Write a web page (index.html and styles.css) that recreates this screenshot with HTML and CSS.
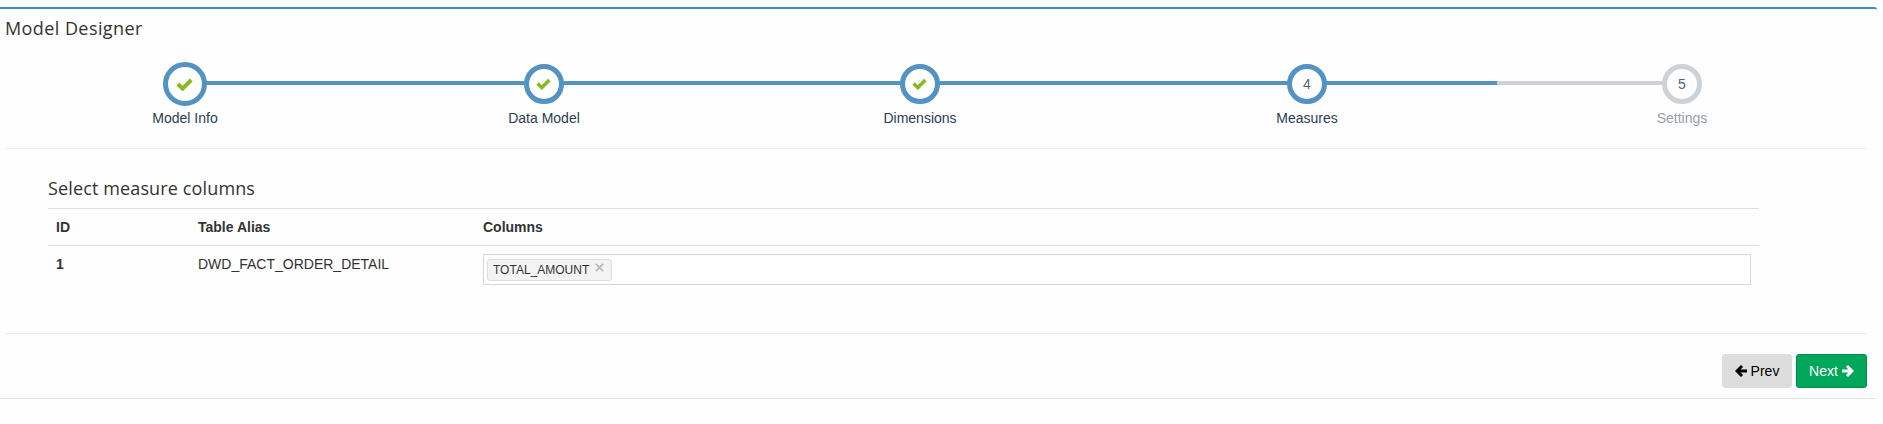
FILE: index.html
```html
<!DOCTYPE html>
<html lang="en">
<head>
<meta charset="utf-8">
<title>Model Designer</title>
<link rel="stylesheet" href="styles.css">
</head>
<body>
<section class="box">
  <h4 class="title">Model Designer</h4>
  <ul class="steps">
    <li class="step done current"><span class="dot"><svg class="check" viewBox="0 0 17 13"><path d="M1.8 6 6.6 10.6 15.2 2"/></svg></span><span class="label">Model Info</span></li>
    <li class="step done"><span class="dot"><svg class="check" viewBox="0 0 17 13"><path d="M1.8 6 6.6 10.6 15.2 2"/></svg></span><span class="label">Data Model</span></li>
    <li class="step done"><span class="dot"><svg class="check" viewBox="0 0 17 13"><path d="M1.8 6 6.6 10.6 15.2 2"/></svg></span><span class="label">Dimensions</span></li>
    <li class="step done"><span class="dot">4</span><span class="label">Measures</span></li>
    <li class="step"><span class="dot">5</span><span class="label">Settings</span></li>
  </ul>
  <div class="content">
    <h4 class="subtitle">Select measure columns</h4>
    <div class="table">
      <div class="row head"><span>ID</span><span>Table Alias</span><span>Columns</span></div>
      <div class="row"><b>1</b><span>DWD_FACT_ORDER_DETAIL</span>
        <div class="select"><span class="tag">TOTAL_AMOUNT<svg class="close" viewBox="0 0 10 10"><path d="M1 1 9 9M9 1 1 9"/></svg></span></div>
      </div>
    </div>
  </div>
  <div class="actions">
    <button class="btn prev"><svg class="arrow" viewBox="0 0 12 12"><path d="M7 1 2 6 7 11M2.4 6H12"/></svg>Prev</button>
    <button class="btn next">Next<svg class="arrow" viewBox="0 0 12 12"><path d="M5 1 10 6 5 11M9.6 6H0"/></svg></button>
  </div>
</section>
</body>
</html>
```
FILE: styles.css
```css
* { box-sizing: border-box; }
body { margin: 0; padding-top: 7px; background: #fefefe; color: #333; font: 14px/20px "Liberation Sans", Arial, sans-serif; }
.box { width: 1877px; height: 392px; padding: 0 10px 0 5px; background: #fefefe; border-top: 2px solid #3c8dbc; border-bottom: 1px solid #e5e5e5; border-radius: 0 3px 3px 0; box-shadow: 0 0 1px rgba(0,0,0,.06); }
.title, .subtitle { margin: 0; font: 400 18px/20px "Open Sans", "Noto Sans", sans-serif; white-space: nowrap; }
.title { padding-top: 9px; height: 53px; letter-spacing: .42px; }
.steps { display: grid; grid-template-columns: 360px 358px 394px 380px 370px; height: 87px; margin: 0; padding: 0; list-style: none; border-bottom: 1px solid #eee; }
.step { position: relative; display: flex; flex-direction: column; align-items: center; padding-top: 2px; color: #949ea7; }
.step::before { content: ""; position: absolute; top: 19px; left: 0; width: 100%; height: 4px; background: #ced1d6; }
.step:first-child::before { left: 50%; width: 50%; }
.step:last-child::before { width: 50%; }
.step.done { color: #2b3d53; }
.step.done::before { background: #5293c4; }
.dot { position: relative; display: flex; align-items: center; justify-content: center; width: 40px; height: 40px; border: 5px solid #ced1d6; border-radius: 50%; background: #fefefe; color: #546474; font-size: 14px; line-height: 30px; }
.done .dot { border-color: #5293c4; }
.current { padding-top: 0; }
.current .dot { width: 44px; height: 44px; margin-bottom: -2px; }
.check { width: 15px; height: 12px; margin-right: 1px; fill: none; stroke: #87ba21; stroke-width: 4; }
.current .check { width: 17px; height: 13px; }
.label { margin-top: 4px; }
.content { height: 185px; padding: 29px 108px 0 43px; border-bottom: 1px solid #eee; }
.subtitle { height: 30px; letter-spacing: .13px; }
.table { border-top: 1px solid #ddd; }
.row { display: grid; grid-template-columns: 142px 285px 1fr; padding: 8px; }
.head { height: 37px; font-weight: 700; border-bottom: 1px solid #ddd; }
.select { height: 31px; padding: 4px 3px; border: 1px solid #d2d6de; background: #fff; }
.tag { display: inline-flex; width: 125px; height: 22px; padding: 0 7px 0 5px; justify-content: space-between; border: 1px solid #ddd; border-radius: 3px; background: #f3f3f3; font-size: 12px; line-height: 20px; }
.close { width: 9px; height: 9px; margin-top: 3px; fill: none; stroke: #bbb; stroke-width: 2.2; }
.actions { display: flex; justify-content: flex-end; gap: 4px; padding-top: 20px; }
.btn { display: flex; align-items: center; justify-content: center; gap: 4px; width: 71px; height: 34px; padding: 0; border: 1px solid #008d4c; border-radius: 3px; background: #00a65a; color: #fff; font: inherit; }
.prev { width: 70px; border-color: #ddd; background: #ddd; color: #000; }
.arrow { width: 12px; height: 12px; fill: none; stroke: currentColor; stroke-width: 2.9; }
```
